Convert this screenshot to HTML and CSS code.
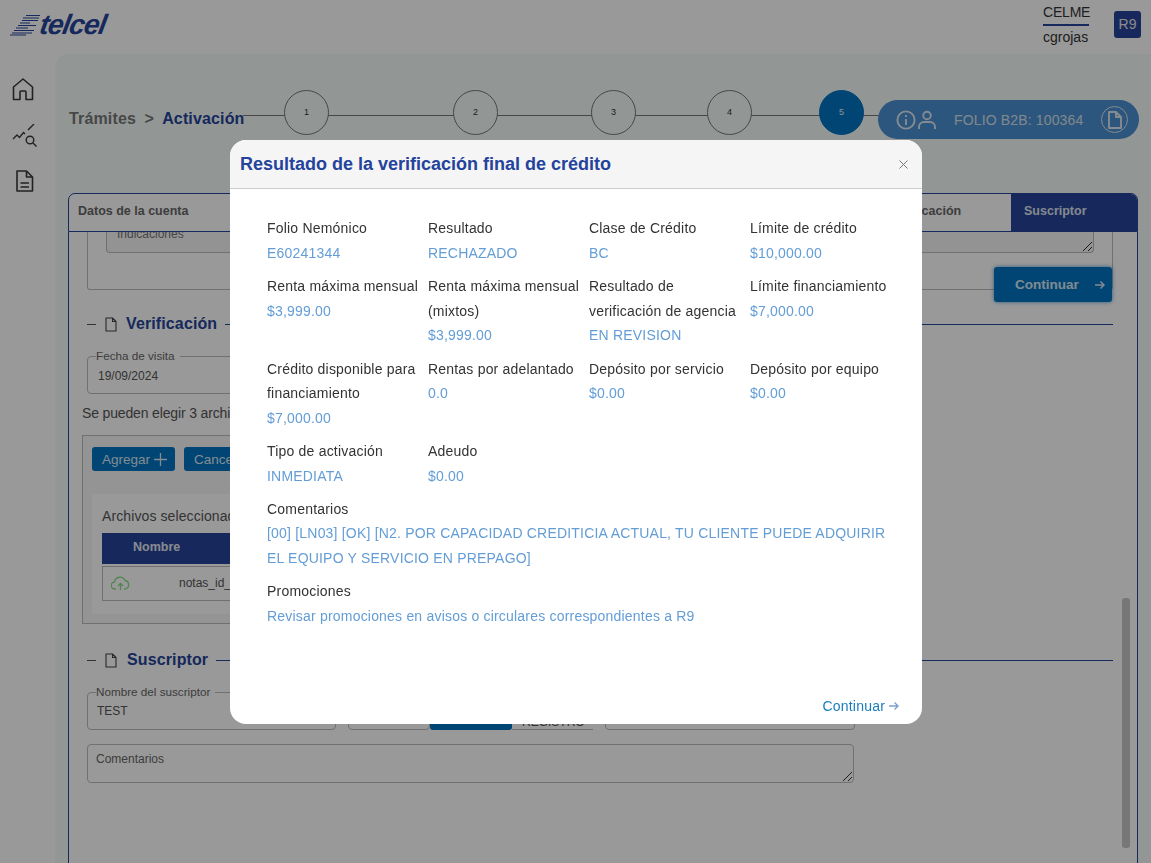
FILE: index.html
```html
<!DOCTYPE html>
<html lang="es">
<head>
<meta charset="UTF-8" />
<meta name="viewport" content="width=device-width, initial-scale=1" />
<title>Activación</title>
<link rel="stylesheet" href="styles.css">
</head>
<body>

<header class="topbar">
  <div class="logo">
    <svg class="logo-mark" width="32" height="22" viewBox="0 0 32 22">
      <g stroke="#264499" stroke-width="1.2">
        <path d="M16 1.5h14M13 4h16M12 6.500h16M10 9h10M8 11.500h18M6 14h12M4 16.500h20M2 19h20M0 21h16" />
      </g>
    </svg>
    <span class="logo-text">telcel</span>
  </div>
  <div class="user">
    <div class="user-names">
      <span class="user-org">CELME</span>
      <span class="user-name">cgrojas</span>
    </div>
    <div class="user-badge">R9</div>
  </div>
</header>

<div class="layout">
  <nav class="sidenav">
    <svg width="26" height="24" viewBox="0 0 26 24" fill="none" stroke="#3a3a3a" stroke-width="1.6" stroke-linejoin="round"><path d="M2.500 9 12 1l9.500 8v12.500H15V14a1 1 0 0 0-1-1h-4a1 1 0 0 0-1 1v7.500H2.500z" /></svg>
    <svg width="26" height="24" viewBox="0 0 26 24" fill="none" stroke="#3a3a3a" stroke-width="1.4"><path d="M2 15l4-4 2.500 2.500 4-5 1.500 1.500M17 6l6-6" /><circle cx="19" cy="16" r="3.800" /><path d="M22 19l3.500 3.500" /></svg>
    <svg width="26" height="24" viewBox="0 0 26 24" fill="none" stroke="#3a3a3a" stroke-width="1.6" stroke-linejoin="round"><path d="M6 1h9.500L21.500 7v14H6zM15.500 1v6h6M9.500 13h8.500M9.500 17h8.500" /></svg>
  </nav>

  <main class="main">
    <div class="topline">
      <div class="crumbs">Trámites <span class="crumb-sep">&gt;</span> <span class="crumb-current">Activación</span></div>
      <div class="stepper">
        <span class="step step-1">1</span>
        <span class="step step-2">2</span>
        <span class="step step-3">3</span>
        <span class="step step-4">4</span>
        <span class="step step-5 step-active">5</span>
      </div>
      <div class="folio">
        <svg width="20" height="20" viewBox="0 0 20 20" fill="none" stroke="#dfe8f0" stroke-width="1.9"><circle cx="10" cy="10" r="8.600" /><path d="M10 9v6M10 5v2" /></svg>
        <svg width="20" height="20" viewBox="0 0 20 20" fill="none" stroke="#dfe8f0" stroke-width="1.9"><circle cx="10" cy="5.500" r="3.800" /><path d="M2 19v-2a5 5 0 0 1 5-5h6a5 5 0 0 1 5 5v2" /></svg>
        <span class="folio-text">FOLIO B2B: 100364</span>
        <span class="folio-doc">
          <svg width="14" height="18" viewBox="0 0 14 18" fill="none" stroke="#dfe8f0" stroke-width="1.9" stroke-linejoin="round"><path d="M1 1h7l5 5v11H1zM8 1v5h5" /></svg>
        </span>
      </div>
    </div>

    <section class="tabs-card">
      <div class="tabs">
        <div class="tab tab-first">Datos de la cuenta</div>
        <div class="tab tab-verif">Verificación</div>
        <div class="tab tab-active">Suscriptor</div>
      </div>
      <div class="tab-body">
        <div class="tab-inner">
          <div class="address-box">
            <div class="clip-field">
              <span>Indicaciones</span>
              <svg class="grip" width="9" height="9" viewBox="0 0 9 9" stroke="#333" fill="none"><path d="M0 9l9-9M5 9l4-4" /></svg>
            </div>
          </div>
          <button class="btn-continue">
            <span>Continuar</span>
            <svg width="10" height="10" viewBox="0 0 10 10" fill="none" stroke="#d9e7f2" stroke-width="1.500"><path d="M0 5h9M5.500 1.500 9 5 5.500 8.500" /></svg>
          </button>

          <div class="section-head section-verif">
            <span class="dash"></span>
            <svg class="file-icon" width="12" height="15" viewBox="0 0 12 15" fill="none" stroke="#444" stroke-width="1.100" stroke-linejoin="round"><path d="M1 1h6.500L11 4.500V14H1zM7.500 1v3.500H11" /></svg>
            <span class="section-title">Verificación</span>
            <span class="section-line"></span>
          </div>

          <fieldset class="field field-date">
            <legend>Fecha de visita</legend>
            <div class="field-value">19/09/2024</div>
          </fieldset>

          <p class="files-note">Se pueden elegir 3 archivos como máximo</p>

          <div class="upload-box">
            <div class="upload-actions">
              <button class="btn-small">
                <span>Agregar</span>
                <svg width="13" height="13" viewBox="0 0 13 13" fill="none" stroke="#dbe8f2" stroke-width="1.300"><path d="M6.500 0v13M0 6.500h13" /></svg>
              </button>
              <button class="btn-small">Cancelar</button>
            </div>
            <div class="upload-files">
              <div class="files-title">Archivos seleccionados</div>
              <div class="files-head"><span>Nombre</span></div>
              <div class="files-row">
                <svg width="19" height="16" viewBox="0 0 19 16" fill="none" stroke="#86e086" stroke-width="1.300"><path d="M5 14H4a3.500 3.500 0 0 1-.5-7A5.500 5.500 0 0 1 14 5.500a4.300 4.300 0 0 1 0 8.500h-1M9.500 15V9M7 11l2.500-2.500L12 11" /></svg>
                <span class="file-name">notas_id_100364.pdf</span>
              </div>
            </div>
          </div>

          <div class="section-head section-sub">
            <span class="dash"></span>
            <svg class="file-icon" width="12" height="15" viewBox="0 0 12 15" fill="none" stroke="#444" stroke-width="1.100" stroke-linejoin="round"><path d="M1 1h6.500L11 4.500V14H1zM7.500 1v3.500H11" /></svg>
            <span class="section-title">Suscriptor</span>
            <span class="section-line"></span>
          </div>

          <div class="sub-row">
            <fieldset class="field field-name">
              <legend>Nombre del suscriptor</legend>
              <div class="field-value">TEST</div>
            </fieldset>
            <div class="field-plain field-short"></div>
            <div class="sub-btn"></div>
            <div class="sub-text">REGISTRO</div>
            <div class="field-plain field-last"></div>
          </div>

          <div class="comments-box">
            <span>Comentarios</span>
            <svg class="grip" width="9" height="9" viewBox="0 0 9 9" stroke="#333" fill="none"><path d="M0 9l9-9M5 9l4-4" /></svg>
          </div>
        </div>
        <div class="scrollbar"><div class="scroll-thumb"></div></div>
      </div>
    </section>
  </main>
</div>

<div class="overlay"></div>

<div class="modal">
  <div class="modal-head">
    <h2>Resultado de la verificación final de crédito</h2>
    <svg class="modal-close" width="9" height="9" viewBox="0 0 9 9" fill="none" stroke="#777"><path d="M.5.500l8 8M8.500.500l-8 8" /></svg>
  </div>
  <div class="modal-body">
    <div class="data-grid">
      <div><div class="lbl">Folio Nemónico</div><div class="val">E60241344</div></div>
      <div><div class="lbl">Resultado</div><div class="val">RECHAZADO</div></div>
      <div><div class="lbl">Clase de Crédito</div><div class="val">BC</div></div>
      <div><div class="lbl">Límite de crédito</div><div class="val">$10,000.00</div></div>

      <div><div class="lbl">Renta máxima mensual</div><div class="val">$3,999.00</div></div>
      <div><div class="lbl">Renta máxima mensual (mixtos)</div><div class="val">$3,999.00</div></div>
      <div><div class="lbl">Resultado de verificación de agencia</div><div class="val">EN REVISION</div></div>
      <div><div class="lbl">Límite financiamiento</div><div class="val">$7,000.00</div></div>

      <div><div class="lbl">Crédito disponible para financiamiento</div><div class="val">$7,000.00</div></div>
      <div><div class="lbl">Rentas por adelantado</div><div class="val">0.0</div></div>
      <div><div class="lbl">Depósito por servicio</div><div class="val">$0.00</div></div>
      <div><div class="lbl">Depósito por equipo</div><div class="val">$0.00</div></div>

      <div><div class="lbl">Tipo de activación</div><div class="val">INMEDIATA</div></div>
      <div><div class="lbl">Adeudo</div><div class="val">$0.00</div></div>
    </div>
    <div class="data-wide">
      <div class="lbl">Comentarios</div>
      <div class="val">[00] [LN03] [OK] [N2. POR CAPACIDAD CREDITICIA ACTUAL, TU CLIENTE PUEDE ADQUIRIR EL EQUIPO Y SERVICIO EN PREPAGO]</div>
    </div>
    <div class="data-wide">
      <div class="lbl">Promociones</div>
      <div class="val">Revisar promociones en avisos o circulares correspondientes a R9</div>
    </div>
  </div>
  <div class="modal-foot">
    <span class="modal-link">Continuar</span>
    <svg width="10" height="10" viewBox="0 0 10 10" fill="none" stroke="#7d9fd0" stroke-width="1.400"><path d="M0 5h9M5.500 1.500 9 5 5.500 8.500" /></svg>
  </div>
</div>

</body>
</html>
```

FILE: styles.css
```css
* {
  box-sizing: border-box;
}
html, body {
  height: 100%;
}
body {
  margin: 0;
  height: 863px;
  overflow: hidden;
  background: #fff;
  color: #333;
  font-family: "Liberation Sans", Arial, sans-serif;
  font-size: 14px;
}

/* top bar */
.topbar {
  height: 54px;
  display: flex;
  justify-content: space-between;
  padding: 11px 10px 0 10px;
  background: #fff;
}
.logo {
  display: flex;
  align-items: flex-start;
  height: 30px;
  padding-top: 2px;
}
.logo-mark {
  margin-top: 1px;
}
.logo-text {
  display: inline-block;
  margin-left: -2px;
  font-size: 28px;
  line-height: 24px;
  font-weight: bold;
  font-style: italic;
  letter-spacing: -1px;
  color: #264499;
  transform: skewX(-10deg);
}
.user {
  display: flex;
  gap: 25px;
}
.user-names {
  width: 46px;
  display: flex;
  flex-direction: column;
  font-size: 14px;
  color: #333;
}
.user-org {
  height: 15px;
  line-height: 3px;
  letter-spacing: -.2px;
  white-space: nowrap;
  border-bottom: 2px solid #264499;
}
.user-name {
  margin-top: 3px;
  line-height: 16px;
}
.user-badge {
  width: 27px;
  height: 27px;
  border-radius: 3px;
  background: #264499;
  color: #e6e6e6;
  font-size: 14px;
  line-height: 27px;
  text-align: center;
}

.layout {
  display: flex;
  height: 809px;
}
.sidenav {
  width: 55px;
  flex: none;
  display: flex;
  flex-direction: column;
  align-items: flex-start;
  gap: 22px;
  padding: 24px 0 0 11px;
}

.main {
  flex: 1;
  min-width: 0;
  padding: 0 13px 0 13px;
  border-top-left-radius: 14px;
  background: #f4fcf9;
}

/* breadcrumb + stepper */
.topline {
  position: relative;
  height: 139px;
}
.crumbs {
  padding: 56px 0 0 1px;
  font-size: 16px;
  font-weight: bold;
  line-height: 18px;
  color: #777;
  letter-spacing: .15px;
}
.crumb-sep {
  margin: 0 4px;
}
.crumb-current {
  color: #264499;
}
.stepper {
  position: absolute;
  left: 175px;
  top: 61px;
  width: 640px;
  height: 1px;
  background: #777;
}
.step {
  position: absolute;
  top: -25px;
  width: 45px;
  height: 45px;
  border: 1px solid #777;
  border-radius: 50%;
  background: #f4fcf9;
  font-size: 9px;
  line-height: 43px;
  text-align: center;
}
.step-1 { left: 41px; }
.step-2 { left: 210px; }
.step-3 { left: 348px; }
.step-4 { left: 464px; }
.step-5 { left: 576px; }
.step-active {
  background: #0074c2;
  border-color: #0074c2;
  color: #e8f4ff;
}
.folio {
  position: absolute;
  right: -1px;
  top: 46px;
  width: 261px;
  height: 39px;
  display: flex;
  align-items: center;
  padding: 0 11px 0 18px;
  border-radius: 20px;
  background: #4a90d0;
  color: #d8e2ec;
}
.folio svg + svg {
  margin-left: 1px;
}
.folio-text {
  margin-left: 17px;
  flex: 1;
  font-size: 14px;
  letter-spacing: .15px;
}
.folio-doc {
  width: 27px;
  height: 27px;
  display: flex;
  align-items: center;
  justify-content: center;
  border: 1.500px solid #dfe8f0;
  border-radius: 50%;
}

/* tabs */
.tabs-card {
  height: 670px;
  display: flex;
  flex-direction: column;
}
.tabs {
  height: 39px;
  flex: none;
  display: flex;
  border: 1px solid #264499;
  border-radius: 7px 7px 0 0;
  font-size: 12.500px;
  font-weight: bold;
  line-height: 35px;
  overflow: hidden;
  background: #fff;
}
.tab {
  padding-left: 9px;
  color: #666;
}
.tab-first {
  flex: 1;
}
.tab-verif {
  width: 126px;
  padding-left: 6px;
}
.tab-active {
  width: 126px;
  padding-left: 13px;
  background: #264499;
  color: #dfe3ee;
}

.tab-body {
  position: relative;
  flex: 1;
  display: flex;
  overflow: hidden;
  border-left: 1px solid #264499;
  border-right: 1px solid #264499;
  background: #fff;
}
.tab-inner {
  width: 1044px;
  flex: none;
  padding: 0 0 0 13px;
}

.address-box {
  height: 58px;
  margin-left: 5px;
  padding: 0 18px 0 18px;
  border: 1px solid #bbb;
  border-top: none;
  border-radius: 0 0 3px 3px;
}
.clip-field {
  position: relative;
  height: 21px;
  border: 1px solid #bbb;
  border-top: none;
  border-radius: 0 0 4px 4px;
  background: #f5f5f5;
  overflow: hidden;
}
.clip-field span {
  display: block;
  margin: -5px 0 0 10px;
  font-size: 12px;
  line-height: 14px;
  color: #777;
}
.btn-continue {
  display: flex;
  align-items: center;
  gap: 16px;
  width: 118px;
  height: 35px;
  margin: -23px 0 0 912px;
  border: none;
  border-radius: 3px;
  background: #0074c2;
  box-shadow: 0 0 4px rgba(0, 116, 194, .7);
  color: #d9e7f2;
  font-family: inherit;
  font-size: 13.500px;
  font-weight: bold;
  white-space: nowrap;
  padding: 0 0 0 21px;
}

.section-head {
  display: flex;
  align-items: center;
  height: 20px;
  margin-left: 5px;
}
.section-verif {
  margin-top: 12px;
}
.section-sub {
  margin-top: 26px;
}
.section-sub .section-title {
  padding-left: 1px;
}
.dash {
  width: 9px;
  height: 1px;
  background: #555;
  margin-right: 9px;
}
.file-icon {
  margin-right: 9px;
}
.section-title {
  font-size: 16px;
  font-weight: bold;
  color: #264499;
  letter-spacing: .12px;
}
.section-line {
  flex: 1;
  height: 1px;
  margin: 0 0 0 8px;
  background: #264499;
}

.field {
  margin: 0;
  padding: 0 8px 0 8px;
  border: 1px solid #bbb;
  border-radius: 4px;
  min-width: 0;
}
.field legend {
  padding: 0 5px 0 0;
  font-size: 11.700px;
  line-height: 12px;
  color: #666;
}
.field-value {
  margin-left: 1px;
  font-size: 12px;
  line-height: 14px;
  color: #555;
}
.field-date {
  width: 320px;
  height: 44px;
  margin-left: 5px;
  margin-top: 16px;
}
.field-date .field-value {
  margin: 7px 0 0 2px;
}
.files-note {
  margin: 11px 0 13px 0;
  line-height: 17px;
  color: #555;
  font-size: 14px;
  letter-spacing: -.15px;
}
.upload-box {
  width: 400px;
  height: 189px;
  padding: 11px 9px 9px 9px;
  border: 1px solid #bbb;
  background: #f7f7f7;
}
.upload-actions {
  display: flex;
  gap: 9px;
}
.btn-small {
  display: flex;
  align-items: center;
  gap: 4px;
  height: 24px;
  padding: 0 8px 0 10px;
  border: none;
  border-radius: 3px;
  background: #0074c2;
  color: #dbe8f2;
  font-family: inherit;
  font-size: 13.500px;
  min-width: 82px;
}
.upload-files {
  height: 120px;
  margin-top: 23px;
  padding: 14px 10px 0 10px;
  background: #fff;
}
.files-title {
  line-height: 17px;
  color: #555;
  letter-spacing: .1px;
}
.files-head {
  height: 31px;
  margin-top: 8px;
  padding-left: 31px;
  background: #264499;
  color: #e3e7f1;
  font-size: 12.500px;
  font-weight: bold;
  line-height: 29px;
}
.files-row {
  height: 35px;
  margin-top: 2px;
  display: flex;
  align-items: center;
  padding: 0 0 1px 8px;
  border: 1px solid #bbb;
}
.file-name {
  margin-left: 49px;
  font-size: 12px;
  color: #555;
}

.sub-row {
  display: flex;
  align-items: flex-end;
  height: 44px;
  margin: 16px 0 0 5px;
}
.field-name {
  width: 249px;
  height: 44px;
}
.field-name .field-value {
  margin-top: 6px;
}
.field-plain {
  height: 30px;
  border: 1px solid #bbb;
  border-radius: 4px;
}
.field-short {
  width: 82px;
  margin-left: 12px;
}
.sub-btn {
  width: 82px;
  height: 30px;
  background: #0074c2;
  border-radius: 0 0 3px 3px;
}
.sub-text {
  width: 81px;
  height: 30px;
  padding: 15px 0 0 10px;
  border-bottom: 1px solid #bbb;
  font-size: 12px;
  line-height: 14px;
  color: #555;
}
.field-last {
  width: 250px;
  margin-left: 12px;
}
.comments-box {
  position: relative;
  width: 767px;
  height: 39px;
  margin: 14px 0 0 5px;
  padding: 7px 8px;
  border: 1px solid #bbb;
  border-radius: 4px;
  font-size: 12px;
  color: #666;
}
.grip {
  position: absolute;
  right: 1px;
  bottom: 1px;
}
.scrollbar {
  width: 8px;
  margin-left: 9px;
  padding-top: 366px;
}
.scroll-thumb {
  height: 250px;
  border-radius: 3px;
  background: #c6c6c6;
}

/* modal */
.overlay {
  position: fixed;
  inset: 0;
  background: rgba(0, 0, 0, .4);
}
.modal {
  position: fixed;
  left: 230px;
  top: 140px;
  width: 692px;
  height: 584px;
  display: flex;
  flex-direction: column;
  border-radius: 16px;
  overflow: hidden;
  background: #fff;
  letter-spacing: .2px;
}
.modal-head {
  height: 49px;
  flex: none;
  display: flex;
  align-items: center;
  justify-content: space-between;
  padding: 0 14px 0 10px;
  border-bottom: 1px solid #ccc;
  background: #f5f5f5;
}
.modal-head h2 {
  margin: 0;
  font-size: 18px;
  letter-spacing: 0;
  color: #23439c;
}
.modal-body {
  flex: 1;
  padding: 27px 30px 0 37px;
}
.data-grid {
  display: grid;
  grid-template-columns: repeat(4, 161px);
  row-gap: 9px;
}
.data-grid > div {
  padding-right: 6px;
}
.lbl, .val {
  line-height: 24.500px;
}
.lbl {
  color: #333;
}
.val {
  color: #639dd6;
}
.data-wide {
  margin-top: 8.500px;
}
.data-wide .val {
  margin-top: .4px;
}
.modal-foot {
  height: 26px;
  flex: none;
  display: flex;
  align-items: flex-start;
  justify-content: flex-end;
  gap: 4px;
  padding: 0 23px 0 0;
  line-height: 16px;
}
.modal-foot svg {
  margin-top: 3px;
}
.modal-link {
  color: #1a7cbf;
}
```
